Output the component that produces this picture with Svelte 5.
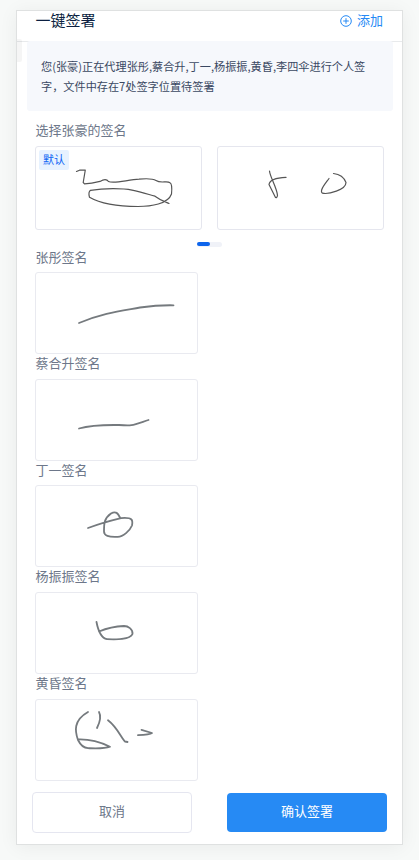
<script>
  const choices = [
    {
      isDefault: true,
      paths: [
        { d: 'M40.5 24.5L43.5 23.2L49.3 23L47.2 35.5L48.5 36.8C55 36.6 60 35.4 64 34.4Q70 31 72.5 34.5C78 37.2 92 32.6 103 32.1Q116 31 120 33.4C125 37 131 33.2 134 35.8Q136.5 37 135.5 47C132 57 115 59.5 102 59.5C83 59.5 65 57 53.5 50.3Q52 45 54.5 43.3C68 41.2 87 41.2 96 43.2C105 45 111 47 119 49.2C124 53 127 54 133 56.5' }
      ]
    },
    {
      isDefault: false,
      paths: [
        { d: 'M51.5 24C52 30 59 41 59.5 48.5Q59 51 57.5 50.5L51 37.5Q52 31 68 30.4' },
        { d: 'M111 31.5C107 37 101 44 104.5 46.2C110 47.5 128 43 128 35.5Q125 27.5 115.5 26.5' }
      ]
    }
  ];

  const signers = [
    { name: '张彤', d: 'M43 50C67 40 85 38 104 34.5Q122 32 137.5 32.3' },
    { name: '蔡合升', d: 'M43 48.5C57 44.5 70 45 83 45C97 46 96 45.5 112.5 40' },
    { name: '丁一', d: 'M52 42C64 37.5 75 34.5 85 32.1C97 31 97 34.5 96 39.5C94 44.5 87 51 81.5 50.8Q68 51.5 68 45.5C68 37.5 68 32.5 75 27.5C80 24.5 82 27.5 84 31.5' },
    { name: '杨振振', d: 'M60.5 29C62 37 65 45 71 46.2C80 46.5 94 47 96.5 41C97 36 92 33 88 33Q75 33.5 63 38.5' },
    { name: '黄昏', d: 'M52 12C37 20.5 39 31.5 42 40C45 46 48 48 52 48.2C60 48.5 68 49 74 46.7C64 42 55 39 42 39.5M63 12C66 17.5 63 24 61 28M72 20.3C81 27 86 39 89 41.5L91.5 42M105.5 29.8L116 33Q114 34.5 102 35.2' }
  ];
</script>

<main>
  <section class="panel">
    <header>
      <h1>一键签署</h1>
      <button class="add">
        <svg width="12" height="12" viewBox="0 0 12 12">
          <circle cx="6" cy="6" r="5.3" />
          <path d="M6 3.2V8.8M3.2 6H8.8" />
        </svg>
        <span>添加</span>
      </button>
    </header>
    <i class="handle"></i>
    <p class="notice">您(张豪)正在代理张彤,蔡合升,丁一,杨振振,黄昏,李四伞进行个人签<br />字，文件中存在7处签字位置待签署</p>

    <div class="content">
      <h2 class="first">选择张豪的签名</h2>
      <div class="choices">
        {#each choices as choice}
          <div class="choice">
            {#if choice.isDefault}<span class="tag">默认</span>{/if}
            <svg viewBox="0 0 165 82">
              {#each choice.paths as path}<path d={path.d} />{/each}
            </svg>
          </div>
        {/each}
      </div>
      <div class="pager"><i></i></div>
      {#each signers as signer}
        <h2>{signer.name}签名</h2>
        <div class="signature">
          <svg viewBox="0 0 161 80"><path d={signer.d} /></svg>
        </div>
      {/each}
    </div>

    <footer>
      <button class="cancel">取消</button>
      <button class="confirm">确认签署</button>
    </footer>
  </section>
</main>

<style>
  :global(body) { margin: 0; background: #f7f9f8; }
  * { box-sizing: border-box; }
  main {
    height: 860px;
    padding: 10px 16px 0;
    overflow: hidden;
    font-family: 'Noto Sans CJK SC', sans-serif;
  }
  button { font: inherit; padding: 0; }
  .panel {
    position: relative;
    display: flex;
    flex-direction: column;
    width: 387px;
    height: 835px;
    border: 1px solid #dfe1e1;
    background: #fff;
    box-shadow: 0 2px 18px rgba(0, 0, 0, 0.06);
  }
  header {
    display: flex;
    flex: none;
    justify-content: space-between;
    height: 31px;
    padding: 0 19px 0 18.5px;
    border-bottom: 1px solid #e8eaec;
  }
  h1 {
    margin: 0;
    color: #0b1f41;
    font-size: 15px;
    font-weight: 400;
    line-height: 18px;
  }
  .add {
    display: flex;
    align-items: center;
    gap: 5px;
    height: 20px;
    border: 0;
    background: none;
    color: #2589f5;
    font-size: 13px;
  }
  .add span { height: 20px; line-height: 18px; }
  .add svg { fill: none; stroke: currentColor; stroke-width: 1; }
  .handle {
    position: absolute;
    top: 28px;
    left: 0;
    width: 5px;
    height: 23px;
    background: rgba(0, 0, 0, 0.04);
    border-radius: 0 2px 2px 0;
  }
  .notice {
    flex: none;
    height: 70px;
    margin: -1px 9.5px 0;
    padding: 14.5px 0 0 14.5px;
    border-radius: 3px;
    background: #f6f8fc;
    color: #3a4862;
    font-size: 11.16px;
    line-height: 20px;
    white-space: nowrap;
  }
  .content { flex: none; padding: 10px 18px 0; }
  h2 {
    height: 24.6px;
    margin: 0;
    padding-left: 0.5px;
    color: #6d778a;
    font-size: 13px;
    font-weight: 400;
    line-height: 18px;
  }
  h2.first { height: 24.7px; }
  .choices { display: flex; justify-content: space-between; width: 349px; }
  .choice {
    position: relative;
    width: 167px;
    height: 84px;
    border: 1px solid #e5e6ee;
    border-radius: 3px;
  }
  .tag {
    position: absolute;
    top: 3px;
    left: 3px;
    width: 30px;
    height: 20px;
    border-radius: 2px;
    background: #e7f2ff;
    color: #0b62f4;
    font-size: 11px;
    line-height: 19px;
    text-align: center;
  }
  .content svg {
    display: block;
    width: 100%;
    height: 100%;
    fill: none;
    stroke: #555;
    stroke-width: 1.2;
    stroke-linecap: round;
    stroke-linejoin: round;
  }
  .pager {
    width: 25px;
    height: 5px;
    margin: 12px auto 0.9px;
    border-radius: 3px;
    background: #f0f2f8;
  }
  .pager i {
    display: block;
    width: 12.5px;
    height: 4px;
    border-radius: 2px;
    background: #0d65ec;
  }
  .signature {
    width: 163px;
    height: 82px;
    border: 1px solid #e9eaf0;
    border-radius: 3px;
  }
  .content .signature svg { stroke: #757a7e; stroke-width: 1.8; }
  footer {
    display: flex;
    justify-content: space-between;
    align-items: center;
    width: 355px;
    height: 41px;
    margin: 11px 0 0 15px;
  }
  footer button {
    width: 160px;
    padding-bottom: 2px;
    border-radius: 4px;
    font-size: 13px;
    line-height: 34px;
  }
  .cancel {
    height: 41px;
    border: 1px solid #e5e6f0;
    background: #fff;
    color: #6d778a;
  }
  .confirm {
    height: 39px;
    border: 0;
    background: #268af4;
    color: #fff;
  }
</style>
